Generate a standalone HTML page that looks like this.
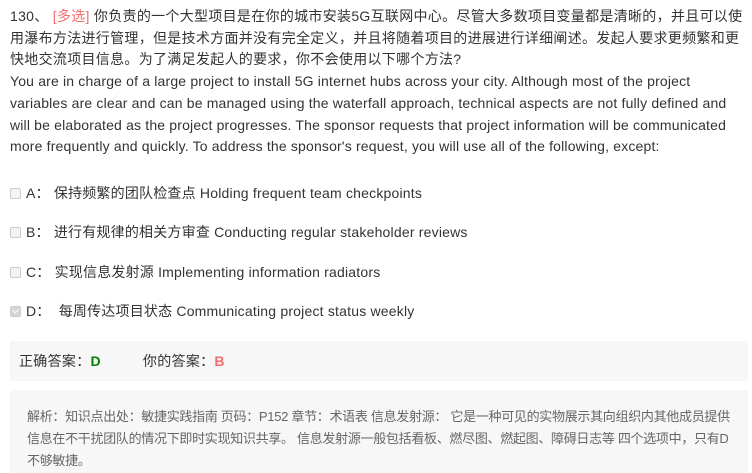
<!DOCTYPE html>
<html><head><meta charset="utf-8"><style>
body{margin:0;background:#fff;font-family:"Liberation Sans","Noto Sans CJK SC",sans-serif;color:#333;width:752px;height:473px;overflow:hidden;position:relative}
.q{position:absolute;left:10px;top:6px;width:745px;font-size:14px;line-height:21.7px;white-space:nowrap;letter-spacing:0.17px}
.cn{letter-spacing:0.3px}
.red{color:#f56c6c}
.opt{position:absolute;left:10px;font-size:14px;line-height:20px;height:20px;display:flex;align-items:center;letter-spacing:0.2px;white-space:pre}
.cb{width:11px;height:11px;border:1px solid #ccc;border-radius:2px;background:#f4f4f4;margin-right:5px;box-sizing:border-box;position:relative}
.cb.on{background:#d5d5d5;border-color:#ccc}
.cb.on:after{content:"";position:absolute;left:3px;top:0.5px;width:3px;height:5px;border:solid #fff;border-width:0 1.5px 1.5px 0;transform:rotate(45deg)}
.ans{position:absolute;left:10px;top:341px;width:738px;height:40px;background:#f7f7f7;font-size:14px;line-height:40px;letter-spacing:0.3px}
.exp{position:absolute;left:10px;top:390px;width:738px;height:83px;background:#f7f7f7;font-size:13px;line-height:22px;color:#666;white-space:nowrap;letter-spacing:-0.3px}
</style></head><body>
<div class="q"><span class="cn">130、 <span class="red">[多选]</span> 你负责的一个大型项目是在你的城市安装5G互联网中心。尽管大多数项目变量都是清晰的，并且可以使<br>用瀑布方法进行管理，但是技术方面并没有完全定义，并且将随着项目的进展进行详细阐述。发起人要求更频繁和更<br>快地交流项目信息。为了满足发起人的要求，你不会使用以下哪个方法?</span><br>You are in charge of a large project to install 5G internet hubs across your city. Although most of the project<br>variables are clear and can be managed using the waterfall approach, technical aspects are not fully defined and<br>will be elaborated as the project progresses. The sponsor requests that project information will be communicated<br>more frequently and quickly. To address the sponsor's request, you will use all of the following, except:</div>
<div class="opt" style="top:183px"><span class="cb"></span>A： 保持频繁的团队检查点 Holding frequent team checkpoints</div>
<div class="opt" style="top:222px"><span class="cb"></span>B： 进行有规律的相关方审查 Conducting regular stakeholder reviews</div>
<div class="opt" style="top:262px"><span class="cb"></span>C： 实现信息发射源 Implementing information radiators</div>
<div class="opt" style="top:301px"><span class="cb on"></span>D：  每周传达项目状态 Communicating project status weekly</div>
<div class="ans"><span style="margin-left:9px">正确答案：<b style="color:#008000">D</b></span><span style="margin-left:42px">你的答案：<b style="color:#f56c6c">B</b></span></div>
<div class="exp"><div style="padding:16px 10px 0 17px">解析：知识点出处：敏捷实践指南 页码：P152 章节：术语表 信息发射源： 它是一种可见的实物展示其向组织内其他成员提供<br>信息在不干扰团队的情况下即时实现知识共享。 信息发射源一般包括看板、燃尽图、燃起图、障碍日志等 四个选项中，只有D<br>不够敏捷。</div></div>
</body></html>
